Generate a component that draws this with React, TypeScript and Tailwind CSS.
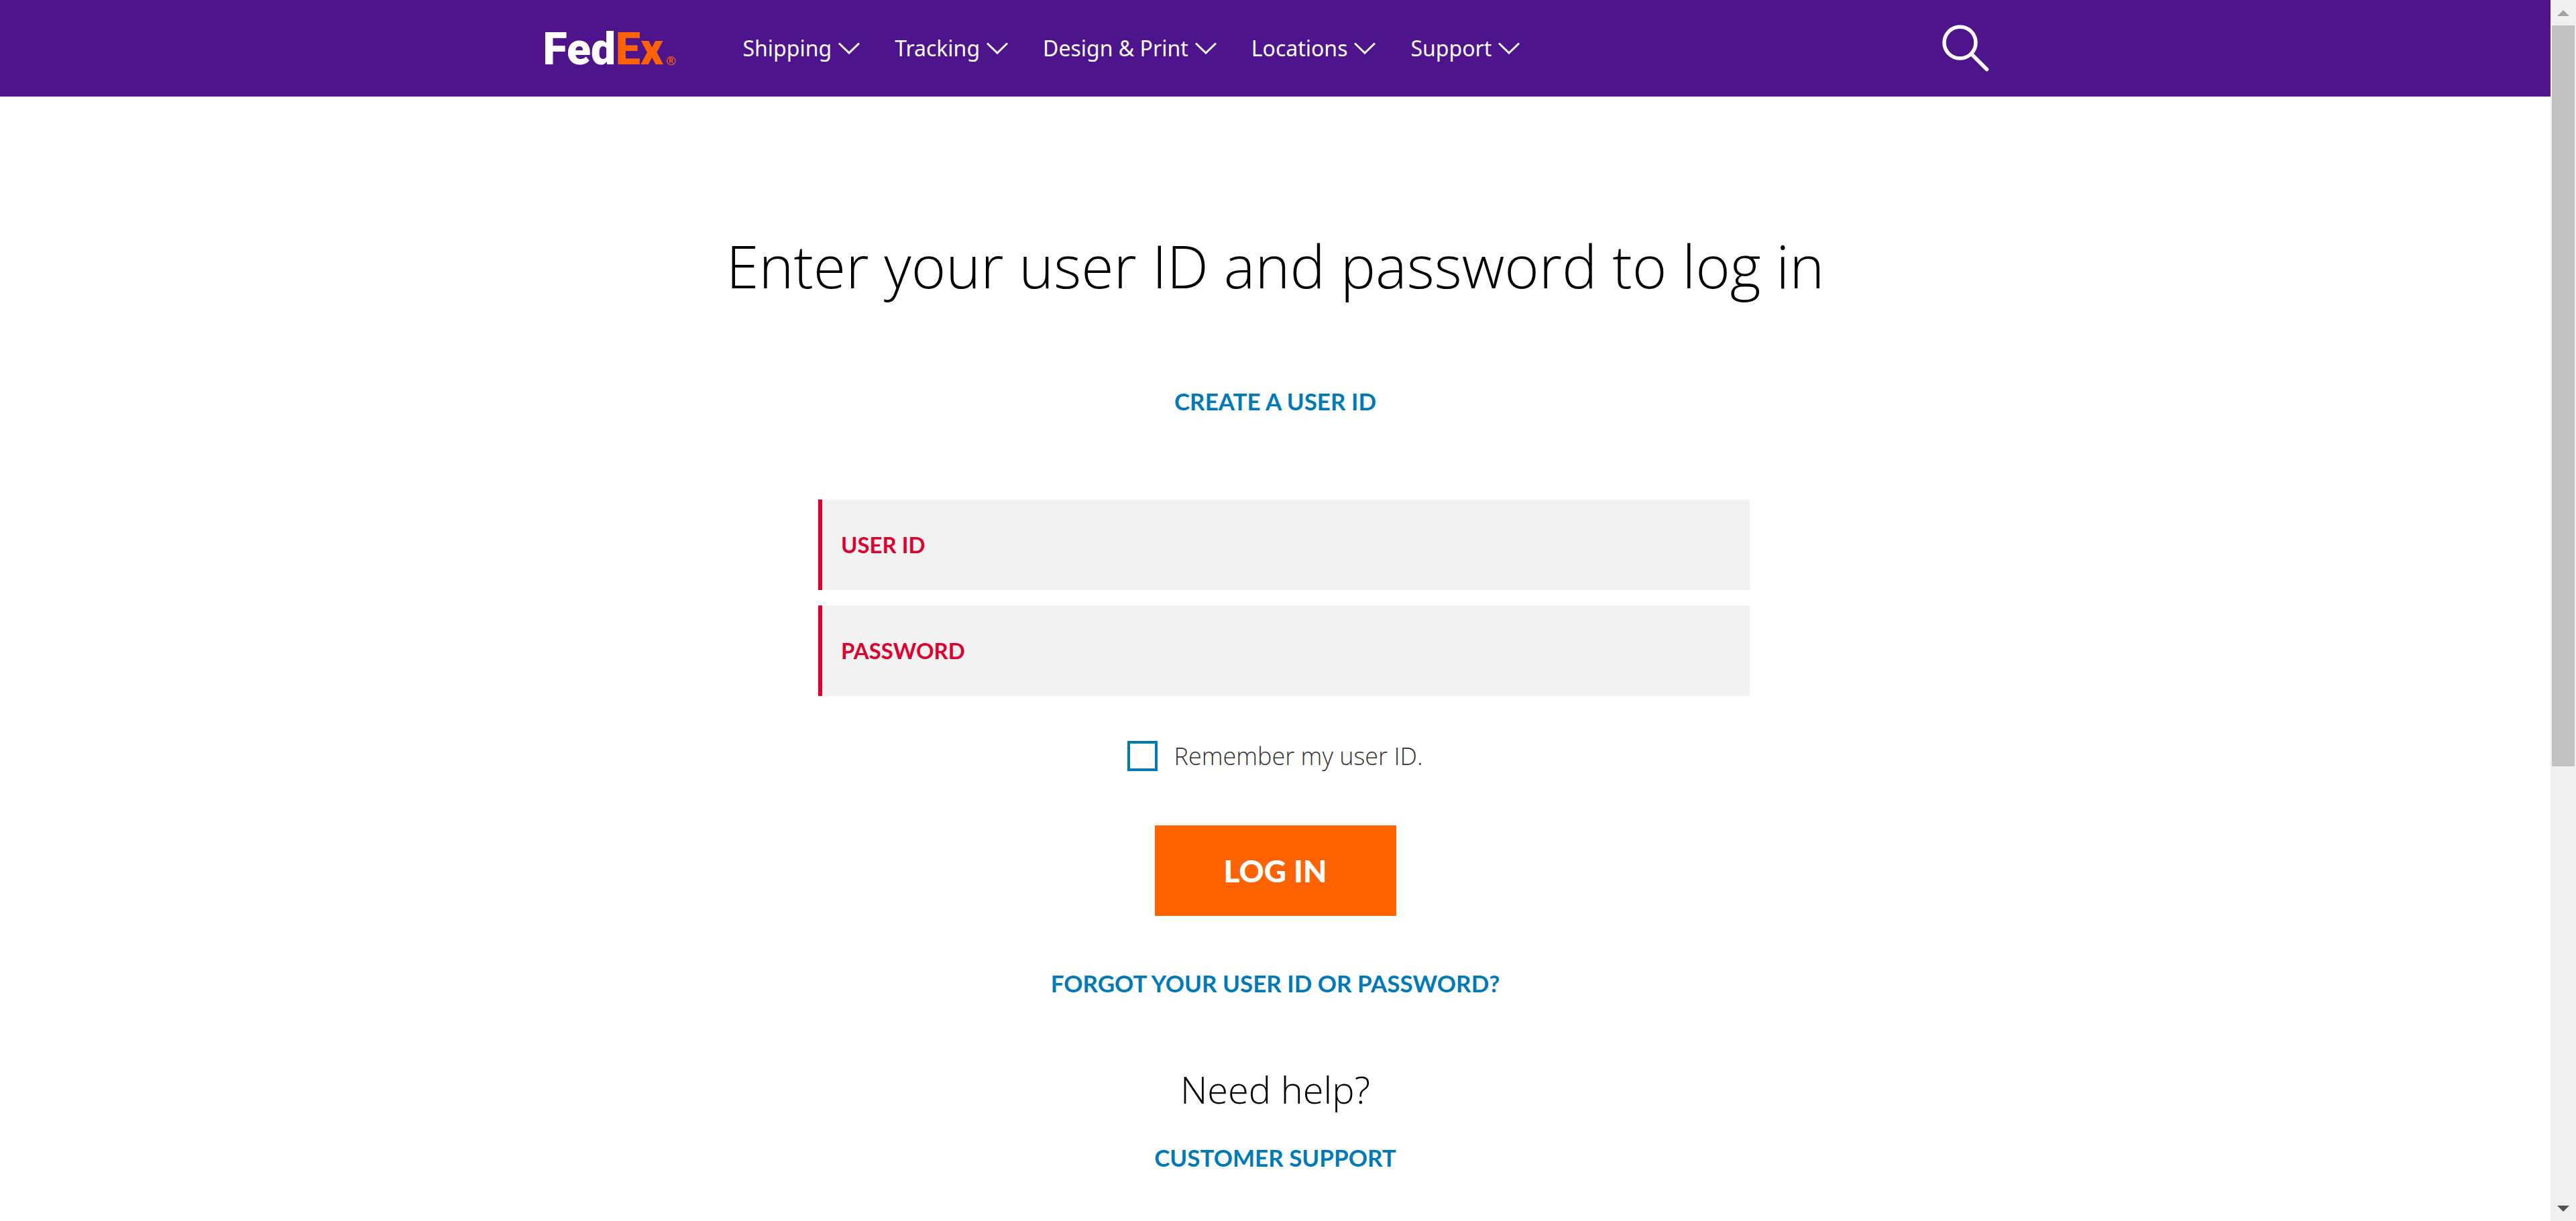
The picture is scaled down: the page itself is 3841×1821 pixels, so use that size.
import React from "react";

const NAV = ["Shipping", "Tracking", "Design & Print", "Locations", "Support"];

function Chevron() {
  return (
    <svg viewBox="0 0 32 18" className="h-[18px] w-8" fill="none" stroke="currentColor" strokeWidth="3" aria-hidden="true">
      <path d="M1 1.5 16 16 31 1.5" />
    </svg>
  );
}

function Logo() {
  return (
    <a href="#" className="flex w-[298px] items-end pt-1 font-['Roboto'] text-[66px] leading-[80px] font-black text-white">
      <span>Fed</span>
      <span className="text-[#ff6200]">Ex</span>
      <span className="mb-3 ml-1 font-['Open_Sans'] text-[18px] leading-[24px] font-semibold text-[#ff6200]">®</span>
    </a>
  );
}

function Field({ label, type }: { label: string; type: string }) {
  return (
    <label className="flex h-[135px] items-center gap-6 border-l-[6px] border-[#de002e] bg-[#f2f2f2] px-7 font-['Lato',sans-serif] text-[33px] font-bold text-[#de002e]">
      <span>{label}</span>
      <input type={type} className="h-full min-w-0 flex-1 bg-transparent font-normal text-[#333333] outline-none" />
    </label>
  );
}

function TextLink({ children, className }: { children: string; className: string }) {
  return (
    <a href="#" className={`font-['Lato',sans-serif] text-[35px] leading-[48px] font-bold text-[#007ab7] ${className}`}>
      {children}
    </a>
  );
}

function ScrollBar() {
  return (
    <div className="sticky top-0 flex h-screen w-[38px] shrink-0 flex-col bg-[#f0f0f0]" aria-hidden="true">
      <div className="flex h-[38px] items-center justify-center">
        <svg viewBox="0 0 18 9" className="h-[9px] w-[18px]" fill="#a3a3a3"><path d="M9 0 18 9H0Z" /></svg>
      </div>
      <div className="flex-1 px-[2px]">
        <div className="h-[63.3%] bg-[#c1c1c1]" />
      </div>
      <div className="flex h-[38px] items-center justify-center">
        <svg viewBox="0 0 18 9" className="h-[9px] w-[18px]" fill="#505050"><path d="M0 0H18L9 9Z" /></svg>
      </div>
    </div>
  );
}

export default function App() {
  return (
    <div className="flex bg-white font-['Open_Sans',sans-serif]">
      <div className="min-w-0 flex-1">
        <header className="bg-[#4d148c] text-white">
          <div className="mx-auto flex h-36 max-w-[2184px] items-center">
            <Logo />
            <nav className="flex items-center gap-[52px] font-['Noto_Sans',sans-serif] text-[32px]">
              {NAV.map((item) => (
                <button key={item} type="button" className="flex items-center gap-[10px] whitespace-nowrap">
                  {item}
                  <Chevron />
                </button>
              ))}
            </nav>
            <button type="button" aria-label="Search" className="mr-7 ml-auto">
              <svg viewBox="0 0 70 70" className="size-[70px]" fill="none" stroke="currentColor" aria-hidden="true">
                <circle cx="26.500" cy="26.500" r="23.500" strokeWidth="5.500" />
                <path d="M44 44 66.500 66.500" strokeWidth="5.500" strokeLinecap="round" />
              </svg>
            </button>
          </div>
        </header>
        <main className="flex flex-col items-center pt-48">
          <h1 className="text-[88px] leading-[120px] font-light text-black">Enter your user ID and password to log in</h1>
          <TextLink className="mt-[118px]">CREATE A USER ID</TextLink>
          <form className="flex w-full flex-col items-center" onSubmit={(e) => e.preventDefault()}>
            <div className="mt-[123px] ml-[26px] flex w-full max-w-[1389px] flex-col gap-[23px]">
              <Field label="USER ID" type="text" />
              <Field label="PASSWORD" type="password" />
            </div>
            <label className="mt-[67px] flex h-[45px] items-center gap-[24px] text-[36px] font-light text-[#333333]">
              <input type="checkbox" className="size-[45px] appearance-none border-4 border-[#007ab7] bg-white checked:bg-[#007ab7]" />
              <span>Remember my user ID.</span>
            </label>
            <button type="submit" className="mt-[81px] h-[135px] w-[360px] bg-[#ff6200] font-['Lato',sans-serif] text-[46px] font-black text-white">
              LOG IN
            </button>
          </form>
          <TextLink className="mt-[76px]">FORGOT YOUR USER ID OR PASSWORD?</TextLink>
          <h2 className="mt-[98px] text-[56px] leading-[72px] font-light text-black">Need help?</h2>
          <TextLink className="mt-[42px]">CUSTOMER SUPPORT</TextLink>
        </main>
      </div>
      <ScrollBar />
    </div>
  );
}
